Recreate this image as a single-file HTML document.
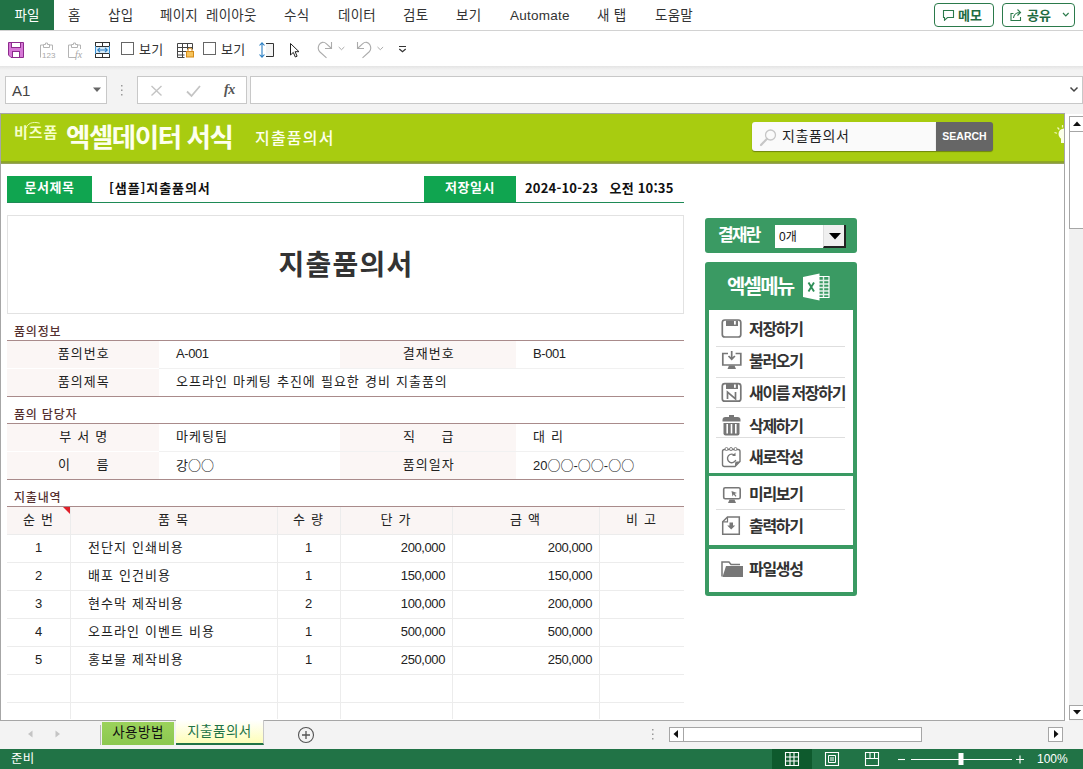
<!DOCTYPE html>
<html lang="ko"><head><meta charset="utf-8"><title>지출품의서</title>
<style>
*{box-sizing:border-box;margin:0;padding:0}
html,body{width:1083px;height:769px;overflow:hidden;background:#fff}
body{font-family:"Liberation Sans","Noto Sans CJK KR",sans-serif;color:#222;position:relative;font-size:13px}
.abs{position:absolute}
.k{font-family:"Noto Sans CJK KR","Liberation Sans",sans-serif}
/* ribbon tabs */
#tabs{left:0;top:0;width:1083px;height:31px;background:#fff;border-bottom:1px solid #d2d2d2}
#tabs .t{position:absolute;top:0;height:30px;line-height:31px;font-size:13.5px;color:#333;white-space:nowrap;letter-spacing:.25px}
#filetab{left:0;top:0;width:54px;height:30px;background:#217346;color:#fff;text-align:center;line-height:31px;font-size:13.5px}
.btn{position:absolute;top:3px;height:24px;border:1px solid #2b7a4b;border-radius:4px;color:#1e6b41;font-weight:bold;font-size:13px;line-height:23px;white-space:nowrap;background:#fff}
/* QAT */
#qat{left:0;top:31px;width:1083px;height:36px;background:#fff}
#fbar{left:0;top:66px;width:1083px;height:48px;background:linear-gradient(#e4e4e4,#f3f3f3 4px,#f3f3f3)}
.fb{position:absolute;top:76px;height:28px;background:#fff;border:1px solid #c8c8c8}
/* sheet */
#sheetbg{left:0;top:113px;width:1065px;height:608px;background:#fff;border:1px solid #a6a6a6}
#band{left:1px;top:114px;width:1063px;height:50px;background:linear-gradient(#a8cc10 0,#a8cc10 46.500px,#8fa821 47.500px,#8c9f3a 49px,#a0a878 50px)}
.lab{position:absolute;background:#10a550;color:#fff;font-weight:bold;font-size:13px;text-align:center;height:26px;line-height:24px;top:176px;letter-spacing:.6px}
.sec{position:absolute;left:14px;font-size:12px;color:#553030;font-weight:500;letter-spacing:.8px;white-space:nowrap}
.row{position:absolute;left:7px;width:677px;height:27px}
.c{position:absolute;top:0;height:100%;font-size:13px;line-height:25px;color:#222;white-space:nowrap;letter-spacing:1px;word-spacing:.5px}
.lb{background:#fbf6f5;text-align:center;padding-left:1.500px}
.hl{position:absolute;left:7px;width:677px;height:1px;background:#a98b8b}
.gl{position:absolute;background:#ececec}
.num{text-align:right;letter-spacing:-.4px}
/* right panel */
.gp{position:absolute;background:#3a9a63;border-radius:3px}
.wp{position:absolute;left:709px;width:144px;background:#fff}
.mi{position:absolute;left:749px;font-size:16px;font-weight:bold;color:#333;letter-spacing:-1.3px;white-space:nowrap;line-height:20px;word-spacing:-1px}
.ms{position:absolute;left:716px;width:129px;height:1px;background:#dedede}
/* bottom */
#tabbar{left:0;top:721px;width:1083px;height:28px;background:#f3f3f3}
#status{left:0;top:749px;width:1083px;height:20px;background:#217346;color:#fff;font-size:12.5px}
#vscroll{left:1069px;top:116px;width:14px;height:605px;background:#f1f1f1}
</style></head><body>
<div id="tabs" class="abs">
 <div id="filetab" class="abs">파일</div>
 <div class="t" style="left:68px">홈</div>
 <div class="t" style="left:108px">삽입</div>
 <div class="t" style="left:160px;word-spacing:4px">페이지 레이아웃</div>
 <div class="t" style="left:284px">수식</div>
 <div class="t" style="left:338px">데이터</div>
 <div class="t" style="left:403px">검토</div>
 <div class="t" style="left:456px">보기</div>
 <div class="t" style="left:510px">Automate</div>
 <div class="t" style="left:597px">새 탭</div>
 <div class="t" style="left:655px">도움말</div>
 <div class="btn" style="left:934px;width:60px;padding-left:23px">메모<svg class="abs" style="left:7px;top:5px" width="13" height="12" fill="none"><path d="M1.500 1.500h10v7h-6l-3 2.700v-2.700h-1z" stroke="#2b7a4b" stroke-width="1.100"/></svg></div>
 <div class="btn" style="left:1002px;width:73px;padding-left:24px">공유<svg class="abs" style="left:6px;top:4px" width="15" height="14" fill="none"><path d="M4.500 5.500h-2.500v7h9.500v-3.500" stroke="#2b7a4b" stroke-width="1.100"/><path d="M4.500 10c.5-3.500 2.500-5.500 6.500-5.500M8.500 1.500l3 3-3 3" stroke="#2b7a4b" stroke-width="1.100"/></svg><svg class="abs" style="left:59px;top:8px" width="8" height="6" fill="none"><path d="M1 1l2.800 2.800 2.800-2.800" stroke="#2b7a4b" stroke-width="1.200"/></svg></div>
</div>
<div id="qat" class="abs">
<svg class="abs" style="left:0;top:0" width="420" height="36" viewBox="0 31 420 36" fill="none" stroke-linecap="butt">
 <!-- save -->
 <path d="M8.5 42.5h15v15h-12.5l-2.5-2.5z" fill="#d779d7" stroke="#8d2b8d"/>
 <rect x="11.5" y="42.5" width="9" height="5" fill="#fff" stroke="#8d2b8d"/>
 <rect x="12.5" y="51.5" width="7" height="6" fill="#fff" stroke="#8d2b8d"/>
 <!-- paste 123 -->
 <g stroke="#b4b4b4">
 <path d="M40.500 57.500v-12.500h3M49 45h3.500v5"/>
 <path d="M43.500 47.500v-3h2v-1.500h2v1.500h2v3z"/>
 </g>
 <text x="42" y="58" font-size="8" fill="#a8a8a8" stroke="none" font-family="Liberation Sans,sans-serif">123</text>
 <!-- paste fx -->
 <g stroke="#b4b4b4">
 <path d="M76 57.500h-7.500v-12.500h3M77 45h3.500v4"/>
 <path d="M71.500 47.500v-3h2v-1.500h2v1.500h2v3z"/>
 </g>
 <text x="75" y="58" font-size="10" font-style="italic" fill="#a8a8a8" stroke="none" font-family="Liberation Serif,serif">fx</text>
 <!-- table with arrows -->
 <rect x="95.500" y="46.500" width="14" height="7" fill="#d6ebfa" stroke="none"/>
 <path d="M95 42.500h15M95 46.500h15M95 53.500h15M95 57.500h15" stroke="#333"/>
 <path d="M95.500 42v4M109.500 42v4M102.500 42v4M95.500 54v4M109.500 54v4M102.500 54v4" stroke="#333"/>
 <path d="M95.500 46v8M109.500 46v8" stroke="#3a8fd0"/>
 <path d="M98 50h9M100 47.800l-2.300 2.200 2.300 2.200M105 47.800l2.300 2.200-2.300 2.200" stroke="#2b7fc3" stroke-width="1.100"/>
 <!-- checkbox 1 -->
 <rect x="121.500" y="42.500" width="12" height="12" stroke="#666" fill="#fff"/>
 <!-- table lock -->
 <path d="M177.500 43.500h15v6M177.500 43.500v14h7M177.500 47.500h15M177.500 51.500h9M177.500 55h7M182.500 43.500v14M187.500 43.500v6" stroke="#444"/>
 <rect x="186.500" y="51.500" width="7" height="5.500" fill="#f6c35b" stroke="#d48a18"/>
 <path d="M188 51.500v-1.500a2 2 0 0 1 4 0v1.500" stroke="#d48a18"/>
 <!-- checkbox 2 -->
 <rect x="203.500" y="42.500" width="12" height="12" stroke="#666" fill="#fff"/>
 <!-- resize -->
 <path d="M262 43v14M259.500 45.500l2.500-2.700 2.500 2.700M259.500 54.500l2.500 2.700 2.500-2.700" stroke="#2b7fc3" stroke-width="1.100"/>
 <path d="M266 43.500h7.500v13h-7.500" stroke="#333"/>
 <rect x="266" y="44" width="7" height="12" fill="#f4f4f4" stroke="none"/>
 <!-- cursor -->
 <path d="M290.500 43.500v11.500l2.800-2.600 2 4.600 1.800-.8-2-4.500h3.900z" stroke="#222" fill="#fff" stroke-linejoin="miter"/>
 <!-- redo -->
 <path d="M331.500 42v6.500h-6.500" stroke="#ababab" stroke-width="1.100"/>
 <path d="M331.500 48.500l-5-4.700c-2.500-2.300-6-2-7.500 1.200s-.5 5.500 1 7l6.500 5.800" stroke="#ababab" stroke-width="1.100"/>
 <path d="M338.700 47l2.800 2.700 2.800-2.700" stroke="#ababab"/>
 <!-- undo -->
 <path d="M357.500 42v6.500h6.500" stroke="#ababab" stroke-width="1.100"/>
 <path d="M357.500 48.500l5-4.700c2.500-2.300 6-2 7.500 1.200s.5 5.500-1 7l-6.500 5.800" stroke="#ababab" stroke-width="1.100"/>
 <path d="M377.500 47l2.800 2.700 2.800-2.700" stroke="#ababab"/>
 <!-- more -->
 <path d="M399 46.500h7" stroke="#333"/>
 <path d="M399.300 49l3.200 2.800 3.200-2.800" stroke="#333" stroke-width="1.200"/>
</svg>
<span class="abs" style="left:139px;top:10px;font-size:13px;line-height:18px;color:#333;letter-spacing:.3px">보기</span>
<span class="abs" style="left:221px;top:10px;font-size:13px;line-height:18px;color:#333;letter-spacing:.3px">보기</span>
</div>
<div id="fbar" class="abs"></div>
<div class="fb" style="left:5px;width:102px"><span class="abs" style="left:6px;top:3px;font-size:15px;color:#444;line-height:22px">A1</span>
<svg class="abs" style="left:87px;top:10px" width="9" height="6"><polygon points="0,0.500 8,0.500 4,5" fill="#666"/></svg></div>
<svg class="abs" style="left:119px;top:83px" width="6" height="14"><rect x="2" y="2" width="1.500" height="1.500" fill="#999"/><rect x="2" y="6.500" width="1.500" height="1.500" fill="#999"/><rect x="2" y="11" width="1.500" height="1.500" fill="#999"/></svg>
<div class="fb" style="left:137px;width:110px">
<svg class="abs" style="left:0;top:0" width="108" height="26" fill="none"><path d="M13.500 9l10 9.500M23.500 9l-10 9.500" stroke="#c4c4c4" stroke-width="1.400"/><path d="M49 14.500l4.500 4.500 8.500-10" stroke="#c4c4c4" stroke-width="1.800"/></svg>
<span class="abs" style="left:86px;top:2px;font-family:'Liberation Serif',serif;font-style:italic;font-weight:bold;font-size:14px;color:#555;line-height:22px;letter-spacing:-.5px">fx</span>
</div>
<div class="fb" style="left:250px;width:833px"><svg class="abs" style="left:818px;top:9px" width="10" height="7" fill="none"><path d="M1.500 1.500l3.500 3.500 3.500-3.500" stroke="#444" stroke-width="1.500"/></svg></div>

<div id="sheetbg" class="abs"></div>
<div id="band" class="abs">
 <div class="abs" style="left:13px;top:8px;font-size:15px;color:#f6ffc8;font-weight:700;letter-spacing:.9px;line-height:22px;white-space:nowrap">비즈폼</div><svg class="abs" style="left:22px;top:5px" width="20" height="10" fill="none"><path d="M3.200 9c1-4 6-7 13.500-4.800" stroke="#f6ffc8" stroke-width=".9"/></svg>
 <div class="abs" style="left:65px;top:4px;font-size:26.500px;color:#fdffee;font-weight:bold;letter-spacing:-1.450px;line-height:40px;white-space:nowrap">엑셀데이터 서식</div>
 <div class="abs" style="left:254px;top:13px;font-size:16px;font-weight:500;color:#fdffee;line-height:24px;white-space:nowrap;letter-spacing:1.2px">지출품의서</div>
 <div class="abs" style="left:751px;top:8px;width:184px;height:29px;background:#fafafa;border-radius:3px 0 0 3px;box-shadow:0 1px 1px rgba(0,0,0,.35)"><svg class="abs" style="left:4px;top:3px" width="24" height="24" fill="none"><circle cx="14.500" cy="10" r="5" stroke="#c6c6c6" stroke-width="1.300"/><path d="M11 13.800l-6 6.200" stroke="#c6c6c6" stroke-width="2.200" stroke-linecap="round"/></svg><span class="abs" style="left:30px;top:3px;font-size:14px;line-height:22px;color:#222;letter-spacing:.6px;white-space:nowrap">지출품의서</span></div>
 <div class="abs" style="left:935px;top:8px;width:57px;height:29px;background:#666;border-radius:0 3px 3px 0;color:#fff;font-weight:bold;font-size:10.500px;text-align:center;line-height:29px;box-shadow:0 1px 1px rgba(0,0,0,.35)">SEARCH</div>
 <svg class="abs" style="left:1051px;top:10px" width="12" height="24" fill="none"><circle cx="12" cy="10" r="5.500" fill="#fbffe8"/><rect x="9" y="14" width="4" height="5" fill="#fbffe8"/><path d="M5.500 3.500l1.800 2M2.500 8.500l2.500.8M10.500 1v2.500" stroke="#f3fbc0" stroke-width="1.200"/></svg>
</div>

<!-- doc title row -->
<div class="lab" style="left:7px;width:85px">문서제목</div>
<div class="abs k" style="left:109px;top:176px;font-size:13px;font-weight:bold;line-height:24px;color:#111;letter-spacing:.9px;white-space:nowrap">[샘플]지출품의서</div>
<div class="lab" style="left:424px;width:92px">저장일시</div>
<div class="abs k" style="left:525px;top:176px;font-size:13px;font-weight:bold;line-height:24px;color:#111;white-space:nowrap;letter-spacing:.2px">2024-10-23&nbsp;&nbsp; 오전 10:35</div>
<div class="abs" style="left:7px;top:202px;width:677px;height:1px;background:#1e8a56"></div>

<!-- title box -->
<div class="abs" style="left:7px;top:215px;width:677px;height:99px;border:1px solid #e2e2e2;text-align:center;font-size:28px;font-weight:bold;color:#333;line-height:99px;letter-spacing:1.2px;text-indent:1px">지출품의서</div>

<div class="gl" style="left:159px;top:368px;width:525px;height:1px;background:#f1f1f1"></div><div class="gl" style="left:159px;top:451px;width:525px;height:1px;background:#f1f1f1"></div><div class="gl" style="left:340px;top:341px;width:1px;height:27px;background:#f1f1f1"></div><div class="gl" style="left:340px;top:424px;width:1px;height:55px;background:#f1f1f1"></div>
<!-- section 1 -->
<div class="sec" style="top:322px">품의정보</div>
<div class="hl" style="top:340px"></div>
<div class="row" style="top:341px">
 <div class="c lb" style="left:0;width:152px">품의번호</div>
 <div class="c num" style="left:169px">A-001</div>
 <div class="c lb" style="left:333px;width:176px">결재번호</div>
 <div class="c num" style="left:526px">B-001</div>
</div>
<div class="row" style="top:369px">
 <div class="c lb" style="left:0;width:152px">품의제목</div>
 <div class="c" style="left:169px">오프라인 마케팅 추진에 필요한 경비 지출품의</div>
</div>
<div class="hl" style="top:396px"></div>

<!-- section 2 -->
<div class="sec" style="top:405px">품의 담당자</div>
<div class="hl" style="top:423px"></div>
<div class="row" style="top:424px">
 <div class="c lb" style="left:0;width:152px">부 서 명</div>
 <div class="c" style="left:169px">마케팅팀</div>
 <div class="c lb" style="left:333px;width:176px">직&nbsp;&nbsp;&nbsp;&nbsp;&nbsp;급</div>
 <div class="c" style="left:526px">대 리</div>
</div>
<div class="row" style="top:452px">
 <div class="c lb" style="left:0;width:152px">이&nbsp;&nbsp;&nbsp;&nbsp;&nbsp;름</div>
 <div class="c" style="left:169px;letter-spacing:0">강<span class="k" style="font-weight:500;color:#111">○○</span></div>
 <div class="c lb" style="left:333px;width:176px">품의일자</div>
 <div class="c" style="left:526px;letter-spacing:0">20<span class="k" style="font-weight:500;color:#111">○○</span>-<span class="k" style="font-weight:500;color:#111">○○</span>-<span class="k" style="font-weight:500;color:#111">○○</span></div>
</div>
<div class="hl" style="top:479px"></div>

<!-- section 3 -->
<div class="sec" style="top:488px">지출내역</div>
<div class="hl" style="top:506px"></div>
<div class="row" style="top:507px;height:27px;background:#faf5f4">
 <div class="c" style="left:0;width:63px;text-align:center">순 번</div>
 <div class="c" style="left:63px;width:207px;text-align:center">품 목</div>
 <div class="c" style="left:270px;width:63px;text-align:center">수 량</div>
 <div class="c" style="left:333px;width:112px;text-align:center">단 가</div>
 <div class="c" style="left:445px;width:147px;text-align:center">금 액</div>
 <div class="c" style="left:592px;width:85px;text-align:center">비 고</div>
</div>
<svg class="abs" style="left:63px;top:507px" width="8" height="8"><polygon points="0,0 8,0 8,8" fill="#e0202a"/></svg>
<div class="gl" style="left:7px;top:534px;width:677px;height:1px"></div>
<div class="gl" style="left:7px;top:562px;width:677px;height:1px"></div>
<div class="gl" style="left:7px;top:590px;width:677px;height:1px"></div>
<div class="gl" style="left:7px;top:618px;width:677px;height:1px"></div>
<div class="gl" style="left:7px;top:646px;width:677px;height:1px"></div>
<div class="gl" style="left:7px;top:674px;width:677px;height:1px"></div>
<div class="gl" style="left:7px;top:702px;width:677px;height:1px"></div>
<div class="gl" style="left:70px;top:507px;width:1px;height:212px"></div>
<div class="gl" style="left:277px;top:507px;width:1px;height:212px"></div>
<div class="gl" style="left:340px;top:507px;width:1px;height:212px"></div>
<div class="gl" style="left:452px;top:507px;width:1px;height:212px"></div>
<div class="gl" style="left:599px;top:507px;width:1px;height:212px"></div>
<div class="row" style="top:535px;height:27px"><div class="c num" style="left:0;width:63px;text-align:center">1</div><div class="c" style="left:81px">전단지 인쇄비용</div><div class="c num" style="left:270px;width:63px;text-align:center">1</div><div class="c num" style="left:333px;width:105px">200,000</div><div class="c num" style="left:445px;width:140px">200,000</div></div>
<div class="row" style="top:563px;height:27px"><div class="c num" style="left:0;width:63px;text-align:center">2</div><div class="c" style="left:81px">배포 인건비용</div><div class="c num" style="left:270px;width:63px;text-align:center">1</div><div class="c num" style="left:333px;width:105px">150,000</div><div class="c num" style="left:445px;width:140px">150,000</div></div>
<div class="row" style="top:591px;height:27px"><div class="c num" style="left:0;width:63px;text-align:center">3</div><div class="c" style="left:81px">현수막 제작비용</div><div class="c num" style="left:270px;width:63px;text-align:center">2</div><div class="c num" style="left:333px;width:105px">100,000</div><div class="c num" style="left:445px;width:140px">200,000</div></div>
<div class="row" style="top:619px;height:27px"><div class="c num" style="left:0;width:63px;text-align:center">4</div><div class="c" style="left:81px">오프라인 이벤트 비용</div><div class="c num" style="left:270px;width:63px;text-align:center">1</div><div class="c num" style="left:333px;width:105px">500,000</div><div class="c num" style="left:445px;width:140px">500,000</div></div>
<div class="row" style="top:647px;height:27px"><div class="c num" style="left:0;width:63px;text-align:center">5</div><div class="c" style="left:81px">홍보물 제작비용</div><div class="c num" style="left:270px;width:63px;text-align:center">1</div><div class="c num" style="left:333px;width:105px">250,000</div><div class="c num" style="left:445px;width:140px">250,000</div></div>


<!-- right panel -->
<div class="gp" style="left:705px;top:218px;width:152px;height:35px">
 <div class="abs" style="left:13px;top:6px;color:#fff;font-weight:bold;font-size:17px;letter-spacing:-1.8px;line-height:24px;white-space:nowrap">결재란</div>
 <div class="abs" style="left:70px;top:7px;width:71px;height:23px;background:#fff"><span class="abs" style="left:4px;top:2px;font-size:12px;line-height:20px;color:#111">0개</span>
  <div class="abs" style="left:48px;top:0;width:23px;height:23px;background:#efefef;border-right:2px solid #222;border-bottom:2px solid #222;border-left:1px solid #ddd"><svg class="abs" style="left:5px;top:8px" width="12" height="7"><polygon points="0,0 12,0 6,6.5" fill="#000"/></svg></div>
 </div>
</div>
<div class="gp" style="left:705px;top:262px;width:152px;height:334px">
 <div class="abs" style="left:22px;top:11px;color:#fff;font-weight:bold;font-size:20px;letter-spacing:-1.8px;line-height:28px;white-space:nowrap">엑셀메뉴</div>
 <svg class="abs" style="left:96px;top:10px" width="34" height="30" fill="none">
  <path d="M16.500 4.500h11.500v21h-11.500" stroke="#fff" stroke-width="1.200"/>
  <path d="M17 8.500h11M17 12h11M17 15.500h11M17 19h11M17 22.500h11M22.500 5v20" stroke="#fff" stroke-width="1.400" opacity=".85"/>
  <polygon points="2,5 18.500,1.500 18.500,28.500 2,25" fill="#fff"/>
  <path d="M7.500 10.500l5.500 9M13 10.500l-5.500 9" stroke="#2f8f58" stroke-width="1.900"/>
 </svg>
</div>
<div class="wp" style="top:310px;height:162.500px"></div>
<div class="wp" style="top:476px;height:69px"></div>
<div class="wp" style="top:549px;height:43px"></div>
<svg class="abs" style="left:715px;top:312px" width="40" height="280" viewBox="715 312 40 280" fill="none">
 <!-- save -->
 <rect x="722.300" y="320" width="18.500" height="17" rx="2.500" stroke="#777" stroke-width="1.700"/>
 <path d="M726 320.500h12v5.500h-12z" fill="#777"/><rect x="734" y="321" width="1.800" height="3.600" fill="#fff"/>
 <!-- load -->
 <path d="M728 353.500h-5.200v11.500h18v-11.500h-5.200" stroke="#777" stroke-width="1.700"/>
 <path d="M731.700 351v8M728.500 356l3.200 3.200 3.200-3.200" stroke="#777" stroke-width="1.700"/>
 <path d="M729 365.500h5.500l1.500 3.500h-8.500z" fill="#777"/>
 <!-- save as N -->
 <rect x="722.300" y="383.700" width="18.500" height="17.500" rx="2.500" stroke="#777" stroke-width="1.700"/>
 <path d="M726 384h12v5h-12z" fill="#777"/><rect x="734" y="384.500" width="1.800" height="3.300" fill="#fff"/>
 <path d="M727.500 399v-7l8 7v-7" stroke="#777" stroke-width="1.700"/>
 <!-- trash -->
 <path d="M729 415h5v2.500h-5z" fill="#777"/>
 <path d="M722.500 421.500v-1.500a3 3 0 0 1 3-3h12a3 3 0 0 1 3 3v1.500z" fill="#777"/>
 <path d="M723.500 423h16v10.500a2 2 0 0 1-2 2h-12a2 2 0 0 1-2-2z" fill="#777"/>
 <path d="M727.200 424v9.500M731.500 424v9.500M735.800 424v9.500" stroke="#fff" stroke-width="1.600"/>
 <!-- new note -->
 <path d="M724.500 449.500h13.500a2 2 0 0 1 2 2v10l-5 5h-10.500a2 2 0 0 1-2-2v-13a2 2 0 0 1 2-2z" stroke="#777" stroke-width="1.400"/>
 <path d="M740 461.500l-5 5v-3a2 2 0 0 1 2-2z" fill="#777"/>
 <circle cx="726.500" cy="449" r="1.500" fill="#fff" stroke="#777" stroke-width=".9"/><circle cx="731" cy="449" r="1.500" fill="#fff" stroke="#777" stroke-width=".9"/><circle cx="735.500" cy="449" r="1.500" fill="#fff" stroke="#777" stroke-width=".9"/>
 <path d="M735 455.500a4.300 4.300 0 1 0 .8 4.500" stroke="#777" stroke-width="1.400"/>
 <path d="M735.500 452.500v3.500h-3.500z" fill="#777"/>
 <!-- preview -->
 <rect x="723.700" y="487.700" width="16.500" height="11" rx="1.500" stroke="#777" stroke-width="1.600"/>
 <path d="M729.500 499.500h5l1.500 3.500h-8z" fill="#777"/>
 <path d="M731.500 491l5.500 2-2.300.8 1.800 2.200-1 .8-1.800-2.200-1.200 1.900z" fill="#777"/>
 <!-- print -->
 <path d="M727.500 517h11.800v17.300h-16.600v-12.500z" stroke="#777" stroke-width="1.500"/>
 <path d="M727.500 517v4.800h-4.800" stroke="#777" stroke-width="1.200"/>
 <path d="M729.500 522.500h3.500v3h2.200l-4 4-4-4h2.300z" fill="#777"/>
 <!-- folder -->
 <path d="M722 576.500v-14.500h7l2 2.500h9" stroke="#777" stroke-width="1.500"/>
 <path d="M726 566h17v11h-20.500z" fill="#777"/>
</svg>
<div class="mi" style="top:320px">저장하기</div>
<div class="ms" style="top:346px"></div>
<div class="mi" style="top:352px">불러오기</div>
<div class="ms" style="top:377px"></div>
<div class="mi" style="top:384px">새이름 저장하기</div>
<div class="ms" style="top:407px"></div>
<div class="mi" style="top:417px">삭제하기</div>
<div class="ms" style="top:437px"></div>
<div class="mi" style="top:448px">새로작성</div>
<div class="mi" style="top:485px">미리보기</div>
<div class="ms" style="top:509px"></div>
<div class="mi" style="top:517px">출력하기</div>
<div class="mi" style="top:560px">파일생성</div>

<!-- scrollbars, bottom -->
<div id="vscroll" class="abs">
 <div class="abs" style="left:0;top:0;width:17px;height:16px;background:#fff;border:1px solid #a6a6a6;border-right:0"></div>
 <div class="abs" style="left:0;top:15px;width:17px;height:98px;background:#fff;border:1px solid #a6a6a6;border-right:0"></div>
 <div class="abs" style="left:0;top:589px;width:17px;height:15px;background:#fff;border:1px solid #a6a6a6;border-right:0"></div>
 <svg class="abs" style="left:4px;top:5px" width="9" height="6"><polygon points="0,5 8,5 4,0.500" fill="#111"/></svg>
 <svg class="abs" style="left:4px;top:594px" width="9" height="6"><polygon points="0,0 8,0 4,4.500" fill="#111"/></svg>
</div>
<div id="tabbar" class="abs">
 <svg class="abs" style="left:0;top:0" width="330" height="29" fill="none">
  <polygon points="32.500,9.500 32.500,16.500 28,13" fill="#c4c4c4"/><polygon points="55.500,9.500 55.500,16.500 60,13" fill="#c4c4c4"/>
  <path d="M100.500 4v20" stroke="#b8b8b8"/>
  <circle cx="306" cy="14" r="7.500" stroke="#555" stroke-width="1.100"/><path d="M302 14h8M306 10v8" stroke="#555" stroke-width="1.300"/>
 </svg>
 <div class="abs" style="left:102px;top:1px;width:72px;height:23px;background:linear-gradient(#9bd25c,#8cc850);font-size:13.500px;color:#111;text-align:center;line-height:21px;letter-spacing:.5px">사용방법</div>
 <div class="abs" style="left:176px;top:-1px;width:88px;height:25px;background:linear-gradient(#fff,#fefeb8);border-bottom:2px solid #217346;border-right:1px solid #c8c8c8;font-size:13.500px;color:#217346;text-align:center;line-height:24px;letter-spacing:.5px">지출품의서</div>
 <svg class="abs" style="left:650px;top:6px" width="6" height="16"><rect x="2" y="2" width="1.500" height="1.500" fill="#999"/><rect x="2" y="6.500" width="1.500" height="1.500" fill="#999"/><rect x="2" y="11" width="1.500" height="1.500" fill="#999"/></svg>
 <div class="abs" style="left:669px;top:6px;width:15px;height:15px;background:#fff;border:1px solid #a6a6a6"></div>
 <div class="abs" style="left:683px;top:6px;width:239px;height:15px;background:#fff;border:1px solid #a6a6a6"></div>
 <div class="abs" style="left:1048px;top:6px;width:15px;height:15px;background:#fff;border:1px solid #a6a6a6"></div>
 <svg class="abs" style="left:673px;top:9px" width="6" height="9"><polygon points="5,0 5,8 0.500,4" fill="#111"/></svg>
 <svg class="abs" style="left:1054px;top:9px" width="6" height="9"><polygon points="0,0 0,8 4.500,4" fill="#111"/></svg>
</div>
<div id="status" class="abs"><span class="abs" style="left:11px;top:1px;line-height:18px;letter-spacing:.3px">준비</span>
 <div class="abs" style="left:772px;top:0;width:40px;height:20px;background:#0e5a2d"></div>
 <svg class="abs" style="left:770px;top:0" width="270" height="20" fill="none" stroke="#fff">
  <path d="M15.500 3.500h13v13h-13zM15.500 8h13M15.500 12h13M20 3.500v13M24 3.500v13" stroke-width="1.100"/>
  <path d="M55.500 3.500h13v13h-13z" stroke-width="1.100"/><path d="M58.500 6.500h7v7h-7zM60 9h4M60 11h4" stroke-width="1"/>
  <path d="M95.500 3.500h13v13h-13zM100 3.500v6h4.500v-6M95.500 9.500h13" stroke-width="1.100"/>
  <path d="M128 10.500h7" stroke-width="1.100"/>
  <path d="M141 10.500h101" stroke-width="1"/>
  <rect x="188.500" y="4" width="5" height="12" fill="#fff" stroke="none"/>
  <path d="M246 10.500h8M250 6.500v8" stroke-width="1.100"/>
 </svg>
 <span class="abs" style="left:1037px;top:1px;line-height:18px;font-size:12px">100%</span></div>
</body></html>
